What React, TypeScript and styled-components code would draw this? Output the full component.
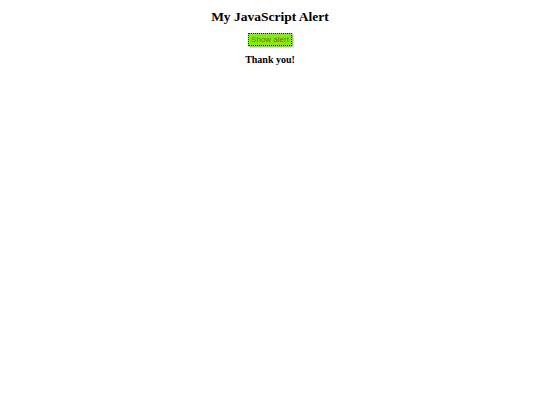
import React from "react";
import styled, { createGlobalStyle } from "styled-components";

const GlobalStyle = createGlobalStyle`
  body {
    margin: 0;
    background: #ffffff;
    font-family: "Liberation Serif", "Times New Roman", serif;
  }
`;

const Page = styled.main`
  display: flex;
  flex-direction: column;
  align-items: center;
  padding-top: 9px;
`;

const Title = styled.h1`
  margin: 0;
  font-size: 13.5px;
  font-weight: bold;
  color: #000;
`;

const AlertButton = styled.button`
  margin-top: 8px;
  padding: 1px 2px;
  font-family: "Liberation Sans", Arial, sans-serif;
  font-size: 8px;
  color: #8a6000;
  background: #7ff000;
  border: 1px dotted #2a2a00;
  box-shadow: 1px 1px 2px rgba(0, 0, 0, 0.45);
  cursor: pointer;
`;

const Thanks = styled.p`
  margin: 8px 0 0;
  font-size: 10px;
  font-weight: bold;
`;

const App = () => {
  return (
    <>
      <GlobalStyle />
      <Page>
        <Title>My JavaScript Alert</Title>
        <AlertButton onClick={() => alert("Hello!")}>Show alert</AlertButton>
        <Thanks>Thank you!</Thanks>
      </Page>
    </>
  );
};

export default App;
